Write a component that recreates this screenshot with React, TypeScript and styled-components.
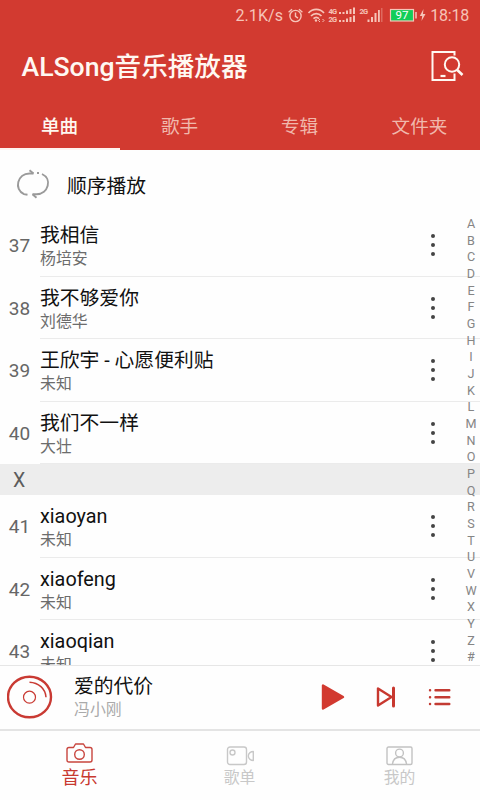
import React from 'react';
import styled, { createGlobalStyle } from 'styled-components';

const RED = '#d23a30';

const GlobalStyle = createGlobalStyle`
  * { box-sizing: border-box; }
  body {
    margin: 0;
    background: #fff;
    font-family: Roboto, "Noto Sans CJK SC", sans-serif;
  }
`;

const Screen = styled.div`
  width: 480px;
  height: 800px;
  display: flex;
  flex-direction: column;
  overflow: hidden;
  background: #fefefe;
`;

const Header = styled.header`
  flex: none;
  height: 150px;
  background: ${RED};
  display: flex;
  flex-direction: column;
`;

const StatusBar = styled.div`
  height: 32px;
  display: flex;
  align-items: center;
  justify-content: flex-end;
  padding-right: 11px;
  color: #f6c4b8;
  font-size: 16px;
  line-height: 32px;
  svg { display: block; flex: none; }
`;

const Speed = styled.span`
  letter-spacing: 0.1px;
  margin-right: 4px;
`;

const Clock = styled.span`
  margin-left: 3px;
  letter-spacing: -0.2px;
`;

const TitleBar = styled.div`
  height: 69px;
  display: flex;
  align-items: center;
  justify-content: space-between;
  padding: 0 16px 0 21.5px;
`;

const AppTitle = styled.h1`
  margin: 0;
  color: #fff8f2;
  font-size: 26.6px;
  line-height: 40px;
  font-weight: 500;
  white-space: nowrap;
`;

const Tabs = styled.nav`
  height: 49px;
  display: grid;
  grid-template-columns: repeat(4, 1fr);
`;

const Tab = styled.div<{ $active?: boolean }>`
  display: flex;
  align-items: center;
  justify-content: center;
  padding-right: 1px;
  font-size: 18.6px;
  font-weight: ${p => (p.$active ? 500 : 400)};
  color: ${p => (p.$active ? '#fff8f0' : '#f0b8ac')};
  border-bottom: 2px solid ${p => (p.$active ? '#fff4f0' : 'transparent')};
`;

const ModeRow = styled.div`
  flex: none;
  height: 64px;
  display: flex;
  align-items: center;
  padding: 4px 0 0 16px;
  gap: 17px;
  font-size: 19.8px;
  color: #111;
`;

const ListArea = styled.main`
  position: relative;
  flex: none;
  height: 451px;
  overflow: hidden;
`;

const SongRow = styled.div`
  height: 62.5px;
  display: flex;
`;

const SongNumber = styled.div`
  width: 40px;
  padding: 1px 1px 0 0;
  display: flex;
  align-items: center;
  justify-content: center;
  font-size: 19px;
  color: #666;
`;

const SongBody = styled.div`
  flex: 1;
  display: flex;
  align-items: center;
  justify-content: space-between;
  border-bottom: 1px solid #ebebeb;
  padding: 1px 45px 0 0;
`;

const SongText = styled.div`
  padding-top: 2px;
`;

const SongTitle = styled.div`
  font-size: 19.8px;
  line-height: 26px;
  color: #111;
  white-space: nowrap;
`;

const Artist = styled.div<{ $light?: boolean }>`
  font-size: 15.9px;
  line-height: 20px;
  color: ${p => (p.$light ? '#aaa' : '#6c6c6c')};
`;

const More = styled.div`
  display: flex;
  flex-direction: column;
  gap: 5px;
  i {
    width: 4px;
    height: 4px;
    border-radius: 50%;
    background: #444;
  }
`;

const SectionBar = styled.div`
  height: 31px;
  padding-left: 13px;
  background: #ededed;
  color: #5c5c5c;
  font-size: 19.5px;
  line-height: 33px;
`;

const LetterIndex = styled.div`
  position: absolute;
  top: 2px;
  right: 0;
  width: 18px;
  display: flex;
  flex-direction: column;
  align-items: center;
  font-size: 12.6px;
  line-height: 16.67px;
  color: #858585;
`;

const Player = styled.section`
  flex: none;
  height: 64px;
  border-top: 1px solid #e6e6e6;
  display: flex;
  align-items: center;
  padding: 0 29px 1px 7px;
  svg { display: block; flex: none; }
`;

const NowPlaying = styled.div`
  flex: 1;
  padding-left: 21px;
`;

const Controls = styled.div`
  display: flex;
  align-items: center;
`;

const Control = styled.div<{ $gap?: number }>`
  margin-left: ${p => p.$gap ?? 0}px;
`;

const BottomNav = styled.nav`
  flex: none;
  height: 71px;
  border-top: 2px solid #e4e4e4;
  display: grid;
  grid-template-columns: repeat(3, 1fr);
`;

const NavItem = styled.div<{ $active?: boolean }>`
  display: flex;
  flex-direction: column;
  align-items: center;
  padding: ${p => (p.$active ? 12 : 15)}px 1px 0 0;
  gap: ${p => (p.$active ? 4 : 1)}px;
  font-size: ${p => (p.$active ? 18 : 15.8)}px;
  line-height: 22px;
  color: ${p => (p.$active ? '#c8392f' : '#c8c8c8')};
  svg { display: block; }
`;

const StatusIcons = () => (
  <svg width="140" height="22" viewBox="287 5 140 22" fill="none" stroke="#f6c4b8" strokeWidth="1.4">
    <circle cx="295.500" cy="16" r="5.600" />
    <path d="M295.500 12.500v3.800l2.500 1.800M288.600 12.300l3.400-3M302.400 12.300l-3.400-3" />
    <path d="M308.500 13c4.300-4.800 11.200-4.800 15.500 0M311 16c3-3.200 7.500-3.200 10.500 0M313.500 18.700c1.600-1.600 3.900-1.600 5.500 0" strokeWidth="1.700" />
    <circle cx="316" cy="20.500" r="1.200" fill="#f6c4b8" stroke="none" />
    <path d="M320 19l-1.500 1.500 1.500 1.500M322.500 19l1.500 1.500-1.500 1.500" strokeWidth="1" />
    <g fill="#f6c4b8" stroke="none" fontFamily="Roboto" fontWeight="700" fontSize="7.500">
      <text x="328.500" y="13.500" textLength="8.500">4G</text>
      <text x="328.500" y="22" textLength="8.500">2G</text>
      <text x="359.500" y="13.500" textLength="8.500">2G</text>
      <path d="M339 12h2v2h-2zM342.500 12h2v2h-2zM346 10.500h2v3.500h-2zM349.500 9h2v5h-2zM353 7.500h2v6.500h-2z" />
      <path d="M339 20h2v2h-2zM342.500 20h2v2h-2zM346 18.500h2v3.500h-2zM349.500 17h2v5h-2zM353 15.500h2v6.500h-2z" />
      <path d="M367.500 19.500h2v2.500h-2zM371 17h2v5h-2zM374.500 13h2v9h-2z" />
      <path d="M378 10h1.800v12h-1.800z" />
      <path d="M381 8h1.500v14h-1.500z" opacity=".35" />
    </g>
    <rect x="390.500" y="9.500" width="23" height="11.500" fill="#12ce58" strokeWidth="1.200" />
    <path d="M416 12v6.500" strokeWidth="1.500" />
    <text x="402" y="19.300" textAnchor="middle" fontFamily="Roboto" fontSize="11.500" fill="#fff" stroke="none">97</text>
    <path d="M423.500 9l-3.700 7h2.400l-.7 5 4-7h-2.500z" fill="#f6c4b8" stroke="none" />
  </svg>
);

const SearchIcon = () => (
  <svg width="33" height="32" viewBox="0 0 33 32" fill="none" stroke="#fff8f2" strokeWidth="2">
    <path d="M23.500 5.500V2H1.500v28h22v-6.500" transform="translate(0 -1)" />
    <circle cx="21" cy="13.500" r="7.200" />
    <path d="M26.300 19l5.200 5" strokeWidth="2.600" />
    <path d="M9.500 25h5" strokeWidth="2.200" />
  </svg>
);

const LoopIcon = () => (
  <svg width="34" height="30" viewBox="0 0 34 30" fill="none" stroke="#9a9a9a" strokeWidth="1.900">
    <path d="M17.500 4.500h-4C1.500 4.500-2.500 20.500 8 25.200l3.500.6" />
    <path d="M16.500 25.200h4c12 0 16-15.500 5.500-20.200" />
    <path d="M13.500 1.200l4 3.300M20.500 28.700l-4-3.500M21 4h2" />
  </svg>
);

const DiscIcon = () => (
  <svg width="46" height="44" viewBox="0 0 46 44" fill="none" stroke="#c93a33">
    <ellipse cx="22.500" cy="22" rx="21.500" ry="20.300" strokeWidth="2.400" />
    <circle cx="22.500" cy="22.200" r="6" strokeWidth="1.200" />
    <path d="M22.500 7.200c9 .3 16 6.500 16.500 15" strokeWidth="1.500" />
  </svg>
);

const PlayIcon = () => (
  <svg width="24" height="28" viewBox="0 0 24 28">
    <path d="M2 2.500v23L22 14z" fill={RED} stroke={RED} strokeWidth="2.400" strokeLinejoin="round" />
  </svg>
);

const NextIcon = () => (
  <svg width="20" height="22" viewBox="0 0 20 22" fill="none" stroke="#c8382f">
    <path d="M2 2.500v17L15.500 11z" strokeWidth="2.400" strokeLinejoin="round" />
    <path d="M17.500 2v18" strokeWidth="3" strokeLinecap="round" />
  </svg>
);

const QueueIcon = () => (
  <svg width="23" height="18" viewBox="0 0 23 18" fill="none" stroke="#c33b33" strokeWidth="2.400" strokeLinecap="round">
    <path d="M7.500 2.300h13.800M7.500 9.200h13.800M7.500 16h13.800M2 2.300h.1M2 9.200h.1M2 16h.1" />
  </svg>
);

const CameraIcon = () => (
  <svg width="27" height="20" viewBox="0 0 27 20" fill="none" stroke="#c8453e" strokeWidth="1.400" strokeLinejoin="round">
    <path d="M3 4.500h4.500L9.500 1h8l2 3.500H24q2 0 2 2V17q0 2-2 2H3q-2 0-2-2V6.500q0-2 2-2z" />
    <circle cx="13.500" cy="11.500" r="4.800" />
  </svg>
);

const VideoIcon = () => (
  <svg width="29" height="20" viewBox="0 0 29 20" fill="none" stroke="#c8c8c8" strokeWidth="1.400" strokeLinejoin="round">
    <rect x="1.500" y="1" width="19" height="17.500" rx="2.500" transform="translate(1 0)" />
    <circle cx="7.500" cy="6.500" r="2.500" />
    <path d="M28.300 5.500v9c-2.200 0-5-1.500-5-4.500s2.800-4.500 5-4.500z" />
  </svg>
);

const ProfileIcon = () => (
  <svg width="27" height="20" viewBox="0 0 27 20" fill="none" stroke="#c2c2c2" strokeWidth="1.400">
    <rect x="1" y="1" width="25" height="17.500" rx="1.500" />
    <circle cx="13.500" cy="7" r="3.900" />
    <path d="M6.500 18c.5-4.200 3-6.800 7-6.800s6.500 2.600 7 6.800" />
  </svg>
);

type Song = { no: number; title: string; artist: string };

const before: Song[] = [
  { no: 37, title: '我相信', artist: '杨培安' },
  { no: 38, title: '我不够爱你', artist: '刘德华' },
  { no: 39, title: '王欣宇 - 心愿便利贴', artist: '未知' },
  { no: 40, title: '我们不一样', artist: '大壮' },
];

const after: Song[] = [
  { no: 41, title: 'xiaoyan', artist: '未知' },
  { no: 42, title: 'xiaofeng', artist: '未知' },
  { no: 43, title: 'xiaoqian', artist: '未知' },
];

const SongItem = ({ no, title, artist }: Song) => (
  <SongRow>
    <SongNumber>{no}</SongNumber>
    <SongBody>
      <SongText>
        <SongTitle>{title}</SongTitle>
        <Artist>{artist}</Artist>
      </SongText>
      <More aria-hidden="true"><i /><i /><i /></More>
    </SongBody>
  </SongRow>
);

export default function App() {
  return (
    <>
      <GlobalStyle />
      <Screen>
        <Header>
          <StatusBar>
            <Speed>2.1K/s</Speed>
            <StatusIcons />
            <Clock>18:18</Clock>
          </StatusBar>
          <TitleBar>
            <AppTitle>ALSong音乐播放器</AppTitle>
            <SearchIcon />
          </TitleBar>
          <Tabs>
            <Tab $active>单曲</Tab>
            <Tab>歌手</Tab>
            <Tab>专辑</Tab>
            <Tab>文件夹</Tab>
          </Tabs>
        </Header>
        <ModeRow>
          <LoopIcon />
          <span>顺序播放</span>
        </ModeRow>
        <ListArea>
          {before.map(s => <SongItem key={s.no} {...s} />)}
          <SectionBar>X</SectionBar>
          {after.map(s => <SongItem key={s.no} {...s} />)}
          <LetterIndex>
            {'ABCDEFGHIJKLMNOPQRSTUVWXYZ#'.split('').map(c => <span key={c}>{c}</span>)}
          </LetterIndex>
        </ListArea>
        <Player>
          <DiscIcon />
          <NowPlaying>
            <SongTitle>爱的代价</SongTitle>
            <Artist $light>冯小刚</Artist>
          </NowPlaying>
          <Controls>
            <Control><PlayIcon /></Control>
            <Control $gap={31}><NextIcon /></Control>
            <Control $gap={32}><QueueIcon /></Control>
          </Controls>
        </Player>
        <BottomNav>
          <NavItem $active><CameraIcon /><span>音乐</span></NavItem>
          <NavItem><VideoIcon /><span>歌单</span></NavItem>
          <NavItem><ProfileIcon /><span>我的</span></NavItem>
        </BottomNav>
      </Screen>
    </>
  );
}
